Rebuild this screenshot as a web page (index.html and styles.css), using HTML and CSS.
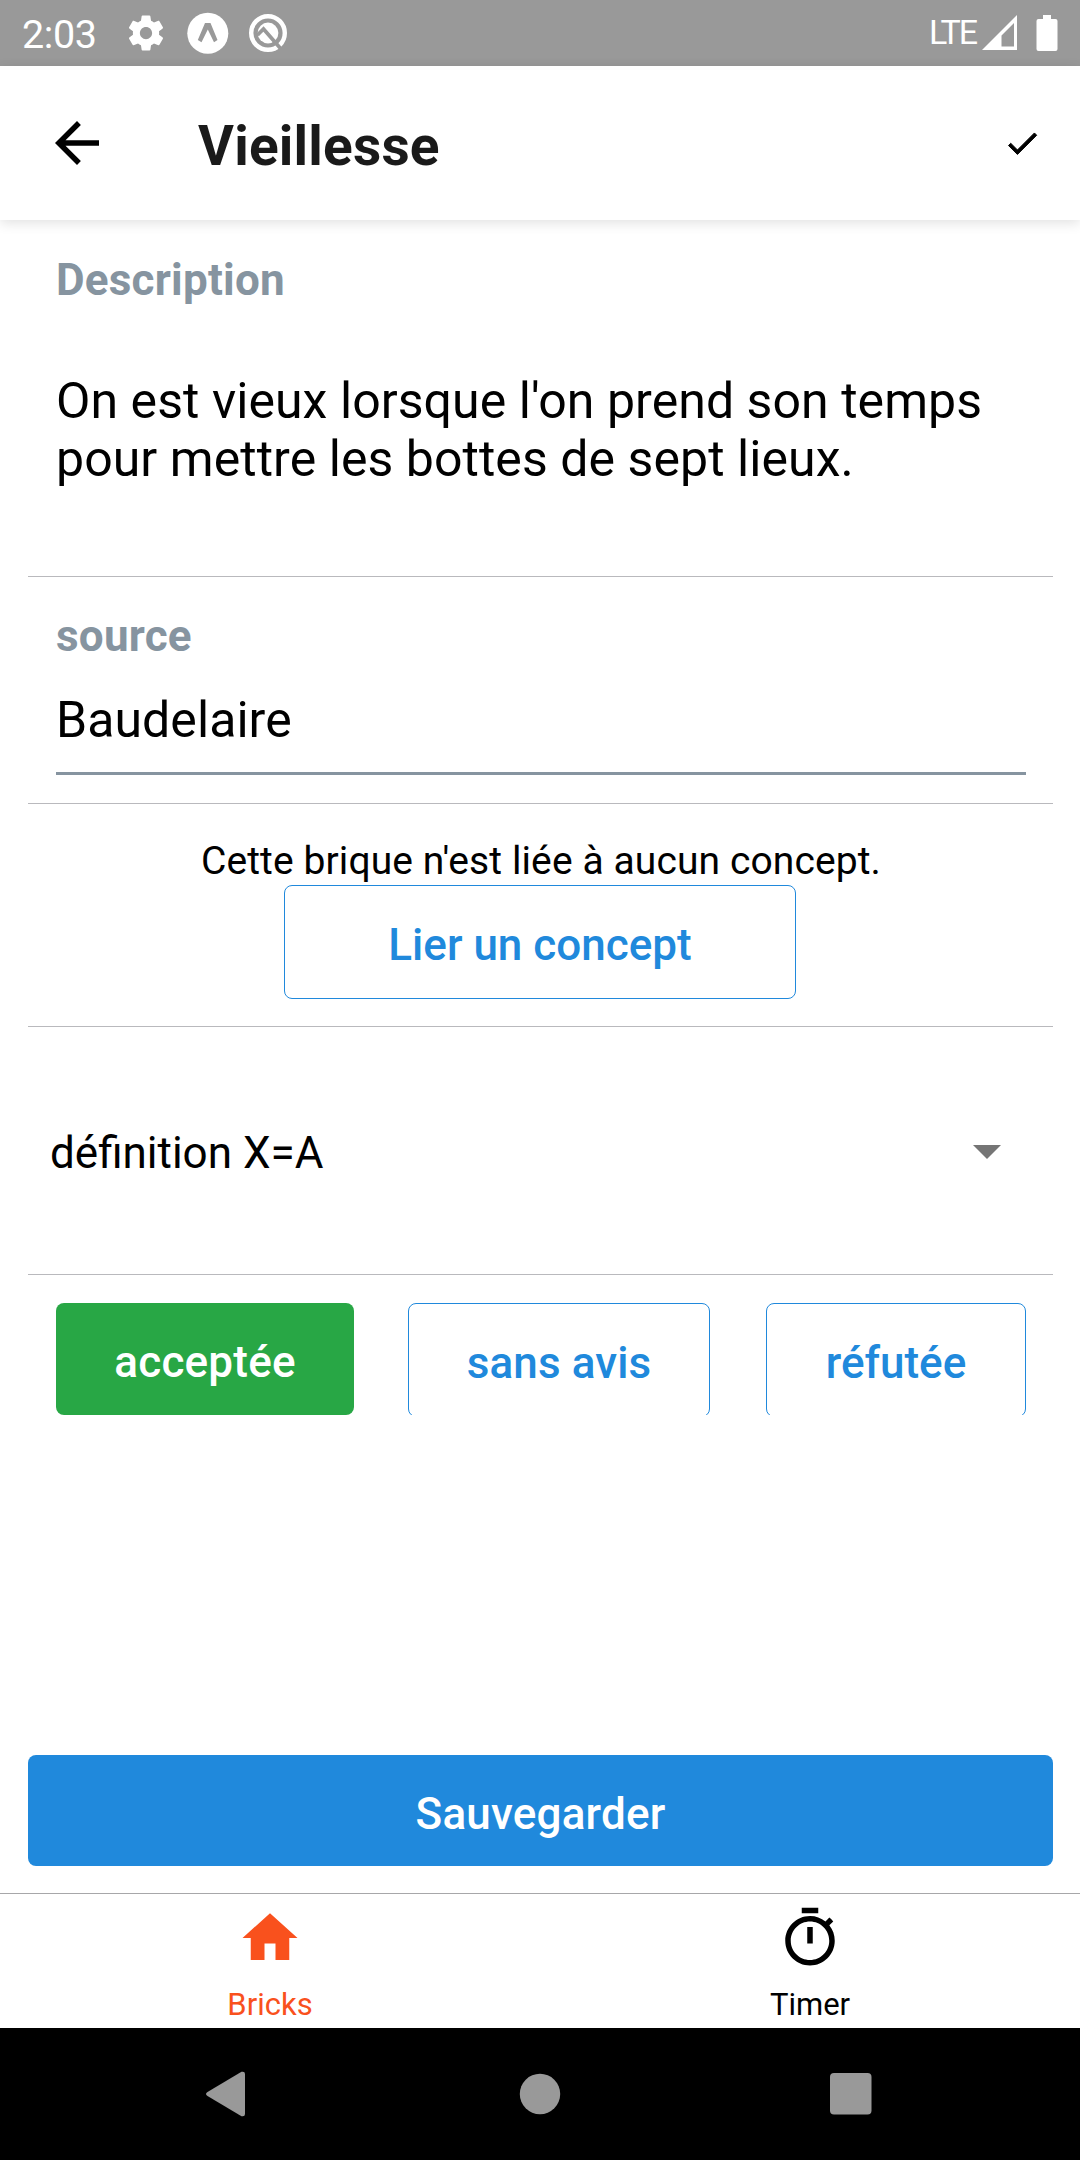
FILE: index.html
```html
<!DOCTYPE html>
<html lang="fr">
<head>
<meta charset="utf-8">
<title>Vieillesse</title>
<link rel="stylesheet" href="styles.css">
</head>
<body>
<div class="screen">
  <div class="status">
    <span class="clock">2:03</span>
    <svg class="gear" width="42" height="42" viewBox="0 0 24 24"><path fill="#fff" d="M19.43 12.98c.04-.32.07-.64.07-.98s-.03-.66-.07-.98l2.11-1.65c.19-.15.24-.42.12-.64l-2-3.46c-.12-.22-.39-.3-.61-.22l-2.49 1c-.52-.4-1.08-.73-1.69-.98l-.38-2.65C14.46 2.18 14.25 2 14 2h-4c-.25 0-.46.18-.49.42l-.38 2.65c-.61.25-1.17.59-1.69.98l-2.49-1c-.23-.09-.49 0-.61.22l-2 3.46c-.13.22-.07.49.12.64l2.11 1.65c-.04.32-.07.65-.07.98s.03.66.07.98l-2.11 1.65c-.19.15-.24.42-.12.64l2 3.46c.12.22.39.3.61.22l2.49-1c.52.4 1.08.73 1.69.98l.38 2.65c.03.24.24.42.49.42h4c.25 0 .46-.18.49-.42l.38-2.65c.61-.25 1.17-.59 1.69-.98l2.49 1c.23.09.49 0 .61-.22l2-3.46c.12-.22.07-.49-.12-.64l-2.11-1.65zM12 15.5c-1.93 0-3.5-1.57-3.5-3.5s1.57-3.5 3.5-3.5 3.5 1.57 3.5 3.5-1.57 3.5-3.5 3.5z"/></svg>
    <svg class="expo" width="42" height="42" viewBox="0 0 42 42"><circle cx="20.800" cy="21.300" r="20.500" fill="#fff"/><path d="M18 11h5.500l7 17-3.500 2.300L20.800 17.500 14.500 30.300 10.800 28z" fill="#999"/></svg>
    <svg class="quick" width="42" height="42" viewBox="0 0 42 42"><circle cx="21" cy="21" r="16.800" fill="none" stroke="#fff" stroke-width="4.400"/><circle cx="21" cy="21" r="10.400" fill="#fff"/><path d="M10.500 23l6-6L34 37" fill="none" stroke="#999" stroke-width="3.700"/></svg>
    <span class="lte">LTE</span>
    <svg class="signal" width="36" height="36" viewBox="0 0 36 36"><path fill="#fff" fill-rule="evenodd" d="M35 0v35H0zM32 8v23.500H19.500V20.500z"/></svg>
    <svg class="battery" width="22" height="36" viewBox="0 0 22 36"><path fill="#fff" d="M7 0h8v4h4.500a2 2 0 0 1 2 2v28a2 2 0 0 1-2 2h-17a2 2 0 0 1-2-2V6a2 2 0 0 1 2-2H7z"/></svg>
  </div>
  <header class="header">
    <svg class="back" width="66" height="66" viewBox="0 0 24 24"><path d="M20 11H7.830l5.590-5.590L12 4l-8 8 8 8 1.410-1.410L7.830 13H20z"/></svg>
    <h1 class="title">Vieillesse</h1>
    <svg class="check" width="38.500" height="38.500" viewBox="0 0 24 24"><path stroke="#000" stroke-width=".6" d="M9 16.170L4.830 12l-1.420 1.410L9 19 21 7l-1.410-1.410z"/></svg>
  </header>
  <main class="form">
    <section class="section description">
      <div class="label">Description</div>
      <p class="value">On est vieux lorsque l'on prend son temps pour mettre les bottes de sept lieux.</p>
    </section>
    <section class="section source">
      <div class="label">source</div>
      <div class="field value">Baudelaire</div>
    </section>
    <section class="section concept">
      <p class="note">Cette brique n'est liée à aucun concept.</p>
      <div class="button outline link">Lier un concept</div>
    </section>
    <section class="section kind">
      <span>définition X=A</span>
      <svg width="28" height="14" viewBox="0 0 28 14"><path fill="#757575" d="M0 0h28L14 14z"/></svg>
    </section>
    <section class="choices">
      <div class="button accepted">acceptée</div>
      <div class="button outline neutral">sans avis</div>
      <div class="button outline refuted">réfutée</div>
    </section>
  </main>
  <div class="button save">Sauvegarder</div>
  <nav class="tabs">
    <div class="tab active">
      <svg width="66" height="66" viewBox="0 0 24 24"><path fill="currentColor" d="M10 20v-6h4v6h5v-8h3L12 3 2 12h3v8z"/></svg>
      <span>Bricks</span>
    </div>
    <div class="tab">
      <svg width="66" height="66" viewBox="0 0 24 24"><path fill="currentColor" d="M15 1H9v2h6V1zm-4 13h2V8h-2v6zm8.030-6.610l1.420-1.420c-.43-.51-.9-.99-1.410-1.410l-1.420 1.420C16.070 4.740 14.120 4 12 4c-4.970 0-9 4.030-9 9s4.020 9 9 9 9-4.030 9-9c0-2.120-.74-4.070-1.970-5.610zM12 20c-3.870 0-7-3.130-7-7s3.130-7 7-7 7 3.130 7 7-3.130 7-7 7z"/></svg>
      <span>Timer</span>
    </div>
  </nav>
  <div class="system">
    <svg width="40" height="46" viewBox="0 0 40 46"><path fill="#999" d="M1.500 21L35.500.8Q39 0 39 3v40q0 3-3.500 2.200L1.500 25q-3-2 0-4z"/></svg>
    <svg class="home" width="42" height="42" viewBox="0 0 42 42"><circle cx="21" cy="21" r="20.200" fill="#999"/></svg>
    <svg class="recent" width="42" height="42" viewBox="0 0 42 42"><rect width="41.500" height="41.500" rx="4" fill="#999"/></svg>
  </div>
</div>
</body>
</html>
```
FILE: styles.css
```css
* { box-sizing: border-box; }
body { margin: 0; background: #fff; font-family: Roboto, sans-serif; color: #000; }
h1, p { margin: 0; }
svg { display: block; flex: none; }

.screen { display: flex; flex-direction: column; width: 1080px; height: 2160px; overflow: hidden; }

.status { display: flex; height: 66px; padding: 0 22px 0 22px; background: #999; color: #fff; }
.clock { width: 103px; font-size: 39.5px; line-height: 69px; letter-spacing: -.4px; }
.gear { margin-top: 12px; }
.expo { margin: 12px 0 0 20px; }
.quick { margin: 12px 0 0 18px; }
.lte { margin-left: auto; width: 53px; font-size: 34px; line-height: 65px; letter-spacing: -2.2px; }
.signal { margin-top: 15px; }
.battery { margin: 15px 0 0 18px; }

.header { display: flex; align-items: center; height: 154px; padding: 0 39px 0 44px; background: #fff; box-shadow: 0 3px 12px rgba(0, 0, 0, .12); }
.title { margin: 6px auto 0 88px; font-size: 55px; line-height: 64px; font-weight: 700; letter-spacing: .2px; color: #1a1a1a; }

.form { display: flex; flex-direction: column; margin: 0 27px 0 28px; }
.section { border-bottom: 1px solid #b9b9bd; }
.label { font-size: 44px; line-height: 52px; font-weight: 700; letter-spacing: .22px; color: #8694a0; }
.value { font-size: 50px; line-height: 58px; letter-spacing: .06px; }
.description { height: 357px; padding: 34px 28px 0; }
.description .value { margin-top: 66px; }
.source { height: 227px; padding: 33px 27px 0 28px; }
.field { height: 113px; padding-top: 29px; border-bottom: 3px solid #8694a0; }
.concept { display: flex; flex-direction: column; align-items: center; height: 223px; padding: 34px 1px 0 0; }
.note { margin: 0 0 1px 2px; font-size: 39px; line-height: 46px; letter-spacing: .1px; }

.button { border-radius: 8px; font-size: 44px; font-weight: 500; text-align: center; white-space: nowrap; }
.outline { border: 1px solid #2089dc; color: #2089dc; }
.link { width: 512px; height: 114px; line-height: 119px; }
.kind { display: flex; align-items: center; justify-content: space-between; height: 248px; padding: 3px 52px 0 22px; font-size: 44px; }
.kind span { margin-top: 2px; }
.choices { display: flex; height: 140px; padding: 28px 27px 0 28px; overflow: hidden; }
.choices .button { height: 114px; line-height: 119px; }
.choices .accepted { width: 298px; height: 112px; background: #28a745; color: #fff; letter-spacing: .2px; }
.choices .neutral { width: 302px; margin: 0 56px 0 54px; letter-spacing: .1px; }
.refuted { width: 260px; }

.save { margin: auto 27px 27px 28px; height: 111px; line-height: 119px; background: #2089dc; color: #fff; letter-spacing: .2px; }

.tabs { display: flex; height: 135px; border-top: 1px solid #a7a7a9; }
.tab { display: flex; flex: 1; flex-direction: column; align-items: center; padding-top: 11px; font-size: 31px; line-height: 36px; }
.tab span { margin-top: 16px; }
.active { color: #f9511d; }

.system { display: flex; align-items: center; height: 132px; padding-left: 206px; background: #000; }
.home { margin-left: 273px; }
.recent { margin-left: 269px; }
```
